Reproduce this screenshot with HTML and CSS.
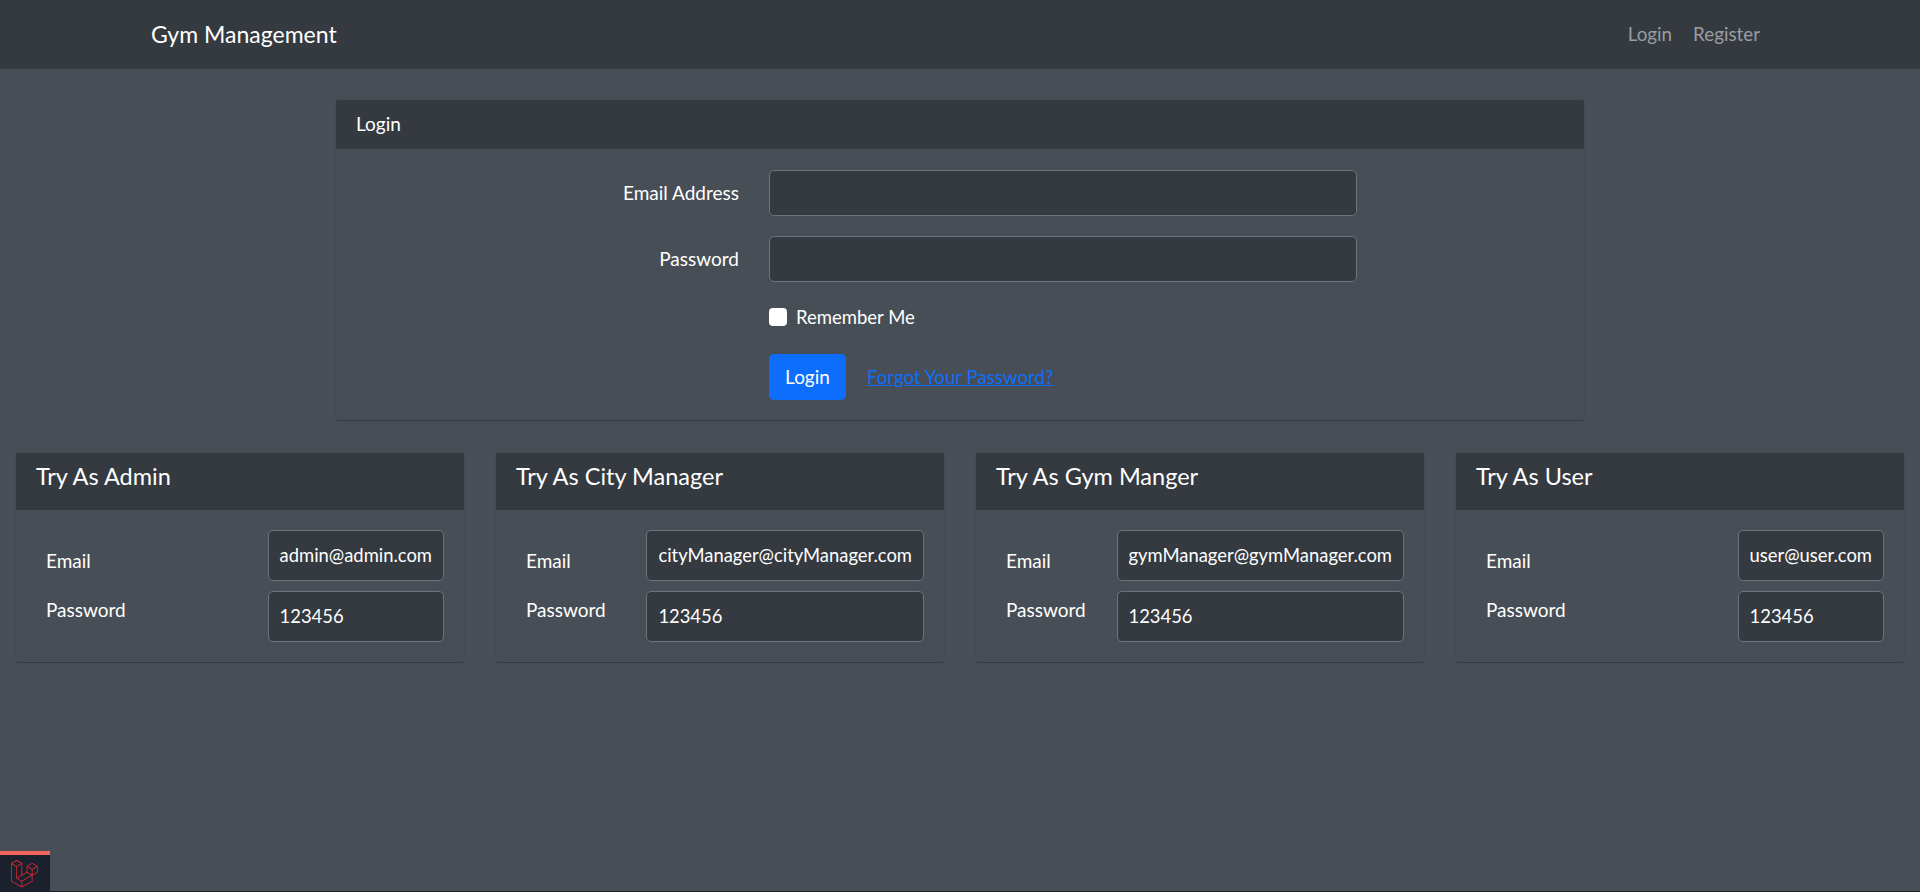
FILE: index.html
```html
<!DOCTYPE html>
<html lang="en">
<head>
    <meta charset="UTF-8">
    <meta name="viewport" content="width=device-width, initial-scale=1.0">
    <title>Gym Management</title>
    <link rel="stylesheet" href="styles.css">
</head>
<body>
    <nav class="navbar">
        <a class="brand" href="#">Gym Management</a>
        <div class="nav-links">
            <a href="#">Login</a>
            <a href="#">Register</a>
        </div>
    </nav>

    <main class="page">
        <section class="card login-card">
            <div class="card-header">Login</div>
            <form class="login-body">
                <div class="form-row">
                    <label for="email">Email Address</label>
                    <input type="email" id="email" class="form-input">
                </div>
                <div class="form-row">
                    <label for="password">Password</label>
                    <input type="password" id="password" class="form-input">
                </div>
                <div class="form-row remember-row">
                    <span class="check-box"></span>
                    <span>Remember Me</span>
                </div>
                <div class="form-row submit-row">
                    <button type="button" class="btn">Login</button>
                    <a class="forgot" href="#">Forgot Your Password?</a>
                </div>
            </form>
        </section>

        <div class="try-grid">
            <section class="card try-card">
                <h5 class="try-title">Try As Admin</h5>
                <div class="try-body">
                    <div class="try-labels"><p>Email</p><p>Password</p></div>
                    <div class="try-values"><div class="value-box">admin@admin.com</div><div class="value-box">123456</div></div>
                </div>
            </section>
            <section class="card try-card">
                <h5 class="try-title">Try As City Manager</h5>
                <div class="try-body">
                    <div class="try-labels"><p>Email</p><p>Password</p></div>
                    <div class="try-values"><div class="value-box">cityManager@cityManager.com</div><div class="value-box">123456</div></div>
                </div>
            </section>
            <section class="card try-card">
                <h5 class="try-title">Try As Gym Manger</h5>
                <div class="try-body">
                    <div class="try-labels"><p>Email</p><p>Password</p></div>
                    <div class="try-values"><div class="value-box">gymManager@gymManager.com</div><div class="value-box">123456</div></div>
                </div>
            </section>
            <section class="card try-card">
                <h5 class="try-title">Try As User</h5>
                <div class="try-body">
                    <div class="try-labels"><p>Email</p><p>Password</p></div>
                    <div class="try-values"><div class="value-box">user@user.com</div><div class="value-box">123456</div></div>
                </div>
            </section>
        </div>
    </main>

    <div class="debug-line"></div>
    <div class="debug-tab">
        <svg class="debug-logo" viewBox="0 0 50 52">
            <path d="M49.626 11.564a.809.809 0 0 1 .028.209v10.972a.8.8 0 0 1-.402.694l-9.209 5.302V39.25c0 .286-.152.55-.4.694L20.42 51.01c-.044.025-.092.041-.14.058-.018.006-.035.017-.054.022a.805.805 0 0 1-.41 0c-.022-.006-.042-.018-.063-.026-.044-.016-.09-.03-.132-.054L.402 39.944A.801.801 0 0 1 0 39.25V6.334c0-.072.01-.142.028-.21.006-.023.02-.044.028-.067.015-.042.029-.085.051-.124.015-.026.037-.047.055-.071.023-.032.044-.065.071-.093.023-.023.053-.04.079-.06.029-.024.055-.05.088-.069h.001l9.61-5.533a.802.802 0 0 1 .8 0l9.61 5.533h.002c.032.02.059.045.088.068.026.02.055.038.078.06.028.029.048.062.072.094.017.024.04.045.054.071.023.04.036.082.052.124.008.023.022.044.028.068a.809.809 0 0 1 .028.209v20.559l8.008-4.611v-10.51c0-.07.01-.141.028-.208.007-.024.02-.045.028-.068.016-.042.03-.085.052-.124.015-.026.037-.047.054-.071.024-.032.044-.065.072-.093.023-.023.052-.04.078-.06.03-.024.056-.05.088-.069h.001l9.611-5.533a.801.801 0 0 1 .8 0l9.61 5.533c.034.02.06.045.09.068.025.02.054.038.077.06.028.029.048.062.072.094.018.024.04.045.054.071.023.039.036.082.052.124.009.023.022.044.028.068zm-1.574 10.718v-9.124l-3.363 1.936-4.646 2.675v9.124l8.01-4.611zm-9.61 16.505v-9.13l-4.57 2.61-13.05 7.448v9.216l17.62-10.144zM1.602 7.719v31.068L19.22 48.93v-9.214l-9.204-5.209-.003-.002-.004-.002c-.031-.018-.057-.044-.086-.066-.025-.02-.054-.036-.076-.058l-.002-.003c-.026-.025-.044-.056-.066-.084-.02-.027-.044-.05-.06-.078l-.001-.003c-.018-.03-.029-.066-.042-.1-.013-.03-.03-.058-.038-.09v-.001c-.01-.038-.012-.078-.016-.117-.004-.03-.012-.06-.012-.09v-.002-21.481L4.965 9.654 1.602 7.72zm8.81-5.994L2.405 6.334l8.005 4.609 8.006-4.61-8.006-4.608zm4.164 28.764l4.645-2.674V7.719l-3.363 1.936-4.646 2.675v20.096l3.364-1.937zM39.243 7.164l-8.006 4.609 8.006 4.609 8.005-4.61-8.005-4.608zm-.801 10.605l-4.646-2.675-3.363-1.936v9.124l4.645 2.674 3.364 1.937v-9.124zM20.02 38.33l11.743-6.704 5.87-3.35-8-4.606-9.211 5.303-8.395 4.833 7.993 4.524z"/>
        </svg>
    </div>
</body>
</html>
```
FILE: styles.css
```css
* {
    box-sizing: border-box;
}

html, body {
    height: 100%;
}

body {
    margin: 0;
    background-color: #474e55;
    color: #fff;
    font-family: Lato, "Open Sans", sans-serif;
    font-size: 19px;
    line-height: 24px;
    overflow: hidden;
}

a {
    text-decoration: none;
}

/* Barre du haut */
.navbar {
    height: 69px;
    background-color: #343a40;
    display: flex;
    align-items: center;
    padding: 0 160px 2px 151px;
    justify-content: space-between;
}

.brand {
    color: #fff;
    font-size: 23px;
}

.nav-links {
    display: flex;
    gap: 21px;
    font-size: 18.8px;
}

.nav-links a {
    color: #9a9da1;
}

/* Cartes */
.card {
    border: 1px solid #434a50;
    border-bottom-color: #343a40;
    border-radius: 4px;
    overflow: hidden;
}

.page {
    padding: 30px 15px 0;
}

.login-card {
    width: 1250px;
    margin: 0 auto;
}

.card-header {
    background-color: #343a40;
    height: 49px;
    padding: 12px 20px;
}

.login-body {
    padding: 21px 0 20px;
}

.form-row {
    display: flex;
    align-items: center;
    padding-left: 433px;
    margin-bottom: 20px;
}

.form-row label {
    margin-left: -433px;
    width: 403px;
    margin-right: 30px;
    text-align: right;
}

.form-input {
    width: 588px;
    height: 46px;
    background-color: #343a40;
    border: 1px solid #6c757d;
    border-radius: 5px;
    color: #fff;
}

.remember-row {
    gap: 9px;
    height: 24px;
    margin-top: 23px;
    margin-bottom: 25px;
    font-size: 18.5px;
}

.check-box {
    width: 18px;
    height: 18px;
    background-color: #fff;
    border-radius: 4px;
}

.submit-row {
    margin-bottom: 0;
    gap: 21px;
}

.btn {
    background-color: #0d6efd;
    color: #fff;
    border: none;
    border-radius: 5px;
    width: 77px;
    height: 46px;
    font: inherit;
}

.forgot {
    color: #0d6efd;
    text-decoration: underline;
    font-size: 18.7px;
}

/* Cartes d'essai */
.try-grid {
    display: grid;
    grid-template-columns: repeat(4, 450px);
    gap: 30px;
    margin-top: 31px;
}

.try-title {
    margin: 0;
    background-color: #343a40;
    height: 57px;
    padding: 8px 20px;
    font-size: 23.5px;
    line-height: 30px;
    font-weight: 400;
}

.try-body {
    display: flex;
    justify-content: space-between;
    padding: 20px 20px 20px 30px;
}

.try-labels {
    padding-top: 19px;
}

.try-labels p {
    margin: 0 0 25px;
}

.try-labels p:last-child {
    margin-bottom: 0;
}

.try-values {
    display: flex;
    flex-direction: column;
    gap: 10px;
}

.value-box {
    height: 51px;
    display: flex;
    align-items: center;
    padding: 0 11px 2px;
    font-size: 18.4px;
    background-color: #343a40;
    border: 1px solid #6c757d;
    border-radius: 5px;
}

/* Bas de page */
.debug-line {
    position: absolute;
    left: 0;
    right: 0;
    bottom: 0;
    height: 1px;
    background-color: #1a202c;
}

.debug-tab {
    position: absolute;
    left: 0;
    bottom: 0;
    width: 50px;
    height: 41px;
    background-color: #1a202c;
    border-top: 4px solid #f4645f;
    padding: 5px 0 0 11px;
}

.debug-logo {
    display: block;
    width: 27px;
    height: 28px;
    fill: #d5272f;
}
```
